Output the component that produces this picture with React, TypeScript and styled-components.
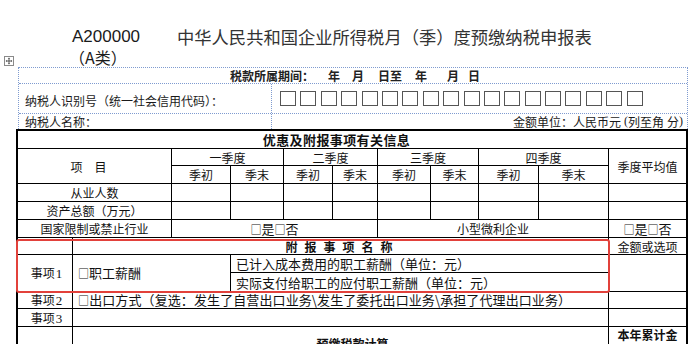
import React from "react";
import styled, { createGlobalStyle } from "styled-components";

const GlobalStyle = createGlobalStyle`
  html, body { margin: 0; padding: 0; background: #fff; }
  body {
    font-family: "Noto Sans CJK SC", "Noto Sans", sans-serif;
    color: #1a1a1a;
  }
`;

const Page = styled.div`
  position: relative;
  width: 700px;
  height: 344px;
  overflow: hidden;
  background: #fff;
`;

const Header = styled.header`
  display: flex;
  align-items: flex-start;
  height: 67px;
  box-sizing: border-box;
  padding: 27px 0 0 72px;
`;

const CodeBlock = styled.div`
  width: 105px;
  display: flex;
  flex-direction: column;
`;

const Code = styled.div`
  font-family: "Liberation Sans", Arial, sans-serif;
  font-size: 17px;
  line-height: 20px;
  color: #1a1a1a;
`;

const Category = styled.div`
  font-size: 16px;
  line-height: 20px;
  color: #1a1a1a;
  margin-left: -3px;
`;

const Title = styled.h1`
  margin: -1px 0 0 0;
  font-weight: 400;
  font-size: 17.3px;
  line-height: 22px;
  color: #333;
  white-space: nowrap;
`;

const MoveHandle = styled.div`
  position: absolute;
  left: 4px;
  top: 56px;
  width: 10px;
  height: 10px;
  line-height: 0;
`;

const dotted = "1px dotted #7f9bd0";

const InfoBox = styled.section`
  margin-left: 18px;
  width: 670px;
  box-sizing: border-box;
  border: ${dotted};
  border-bottom: none;
  font-size: 12px;
  color: #1a1a1a;
`;

const InfoRow = styled.div<{ $h: number; $last?: boolean }>`
  display: flex;
  height: ${(p) => p.$h}px;
  box-sizing: border-box;
  border-bottom: ${(p) => (p.$last ? "none" : dotted)};
`;

const PeriodLine = styled.div`
  display: flex;
  align-items: center;
  padding-left: 211px;
  font-weight: 700;
  line-height: 15px;
  color: #222;
`;

const PeriodItem = styled.span<{ $gap: number }>`
  margin-left: ${(p) => p.$gap}px;
`;

const InfoLabel = styled.div<{ $pt?: number }>`
  width: 253px;
  box-sizing: border-box;
  border-right: ${dotted};
  display: flex;
  align-items: center;
  padding: ${(p) => p.$pt ?? 0}px 0 0 6px;
  line-height: 15px;
  white-space: nowrap;
`;

const BoxList = styled.div`
  display: flex;
  align-items: center;
  gap: 4.4px;
  padding-left: 8px;
`;

const CodeBox = styled.span`
  display: block;
  width: 16px;
  height: 15px;
  box-sizing: border-box;
  border: 1.5px solid #555;
`;

const Unit = styled.div`
  flex: 1;
  display: flex;
  align-items: center;
  justify-content: flex-end;
  padding-right: 4px;
  line-height: 15px;
  white-space: pre;
`;

const Narrow = styled.span`
  font-family: "Liberation Serif", serif;
`;

const Grid = styled.div`
  position: relative;
  margin-left: 16px;
  width: 672px;
  box-sizing: border-box;
  border: 2px solid #000;
  background: #000;
  display: grid;
  grid-template-columns: 54px 98px 58px 52px 48px 44px 52px 47px 59px 69px 77px;
  grid-template-rows: 17px 16px 17px 17px 17px 17px 16px 17px 18px 16px 17px 32px;
  gap: 1px;
`;

const CellBase = styled.div<{ $col: string; $row: string }>`
  grid-column: ${(p) => p.$col};
  grid-row: ${(p) => p.$row};
  background: #fff;
  display: flex;
  align-items: center;
  justify-content: center;
  min-width: 0;
  white-space: nowrap;
  font-size: 12px;
  line-height: 15px;
  color: #111;
`;

const SectionCell = styled(CellBase)<{ $shift?: number }>`
  font-weight: 700;
  font-size: 13px;
  letter-spacing: 0.4px;
  padding-right: ${(p) => p.$shift ?? 0}px;
`;

const SpacedTitle = styled(CellBase)`
  font-weight: 700;
  letter-spacing: 7px;
  padding-left: 4px;
`;

const HeadCell = styled(CellBase)<{ $pr?: number }>`
  padding-right: ${(p) => p.$pr ?? 0}px;
`;

const ChoiceCell = styled(CellBase)`
  font-size: 13px;
`;

const ItemCell = styled(CellBase)`
  padding-left: 3px;
`;

const TextCell = styled(CellBase)<{ $ls?: number }>`
  justify-content: flex-start;
  padding-left: 5px;
  font-size: 13px;
  letter-spacing: ${(p) => p.$ls ?? 0}px;
`;

const CalcTitle = styled(CellBase)`
  font-weight: 700;
  padding-left: 24px;
  align-items: flex-start;
  padding-top: 9px;
`;

const WrapCell = styled(CellBase)`
  font-weight: 700;
  white-space: normal;
  padding: 0 4px;
  text-align: center;
  align-items: flex-start;
  line-height: 16px;
`;

const EmptyCell = styled(CellBase)``;

const Inline = styled.span`
  white-space: nowrap;
`;

const Num = styled.span`
  font-family: "Liberation Serif", serif;
  font-size: 13px;
  margin-left: 1px;
`;

const Tick = styled.span`
  font-size: 0.85em;
`;

const Highlight = styled.div`
  position: absolute;
  left: -2px;
  top: 108px;
  width: 594px;
  height: 54px;
  box-sizing: border-box;
  border: 2px solid #e2413b;
  border-radius: 3px;
  pointer-events: none;
`;

const periodItems: [string, number][] = [
  ["年", 14],
  ["月", 12],
  ["日至", 14],
  ["年", 13],
  ["月", 20],
  ["日", 9],
];

const quarters = ["一季度", "二季度", "三季度", "四季度"];

export default function App() {
  const dataCols = Array.from({ length: 9 }, (_, i) => i + 3);
  return (
    <>
      <GlobalStyle />
      <Page>
        <Header>
          <CodeBlock>
            <Code>A200000</Code>
            <Category>（A类）</Category>
          </CodeBlock>
          <Title>中华人民共和国企业所得税月（季）度预缴纳税申报表</Title>
        </Header>
        <MoveHandle>
          <svg width="10" height="10" viewBox="0 0 10 10">
            <rect x="0.5" y="0.5" width="9" height="9" fill="#fff" stroke="#8a8a8a" />
            <path d="M5 2.2V7.8M2.2 5H7.8" stroke="#444" strokeWidth="0.9" />
            <path d="M5 1.6L3.9 2.8H6.1Z M5 8.4L3.9 7.2H6.1Z M1.6 5L2.8 3.9V6.1Z M8.4 5L7.2 3.9V6.1Z" fill="#444" />
          </svg>
        </MoveHandle>

        <InfoBox>
          <InfoRow $h={16}>
            <PeriodLine>
              <span>税款所属期间：</span>
              {periodItems.map(([t, g], i) => (
                <PeriodItem key={i} $gap={g}>
                  {t}
                </PeriodItem>
              ))}
            </PeriodLine>
          </InfoRow>
          <InfoRow $h={30}>
            <InfoLabel $pt={3}>纳税人识别号（统一社会信用代码）：</InfoLabel>
            <BoxList>
              {Array.from({ length: 18 }).map((_, i) => (
                <CodeBox key={i} />
              ))}
            </BoxList>
          </InfoRow>
          <InfoRow $h={15} $last>
            <InfoLabel>纳税人名称：</InfoLabel>
            <Unit>
              金额单位：人民币元<Narrow> (</Narrow>列至角<Narrow> </Narrow>分<Narrow>)</Narrow>
            </Unit>
          </InfoRow>
        </InfoBox>

        <Grid>
          <SectionCell $col="1 / 12" $row="1" $shift={31}>
            优惠及附报事项有关信息
          </SectionCell>

          <HeadCell $col="1 / 3" $row="2 / 4" $pr={12}>
            项　目
          </HeadCell>
          {quarters.map((q, i) => (
            <HeadCell key={q} $col={`${3 + i * 2} / ${5 + i * 2}`} $row="2">
              {q}
            </HeadCell>
          ))}
          <HeadCell $col="11" $row="2 / 4">
            季度平均值
          </HeadCell>
          {Array.from({ length: 8 }, (_, i) => (
            <HeadCell key={i} $col={`${3 + i}`} $row="3">
              {i % 2 === 0 ? "季初" : "季末"}
            </HeadCell>
          ))}

          <HeadCell $col="1 / 3" $row="4">
            从业人数
          </HeadCell>
          {dataCols.map((c) => (
            <EmptyCell key={`a${c}`} $col={`${c}`} $row="4" />
          ))}
          <HeadCell $col="1 / 3" $row="5">
            资产总额（万元）
          </HeadCell>
          {dataCols.map((c) => (
            <EmptyCell key={`b${c}`} $col={`${c}`} $row="5" />
          ))}

          <HeadCell $col="1 / 3" $row="6">
            国家限制或禁止行业
          </HeadCell>
          <ChoiceCell $col="3 / 7" $row="6">
            <Inline>
              <Tick>□</Tick>是<Tick>□</Tick>否
            </Inline>
          </ChoiceCell>
          <HeadCell $col="7 / 11" $row="6">
            小型微利企业
          </HeadCell>
          <ChoiceCell $col="11" $row="6">
            <Inline>
              <Tick>□</Tick>是<Tick>□</Tick>否
            </Inline>
          </ChoiceCell>

          <EmptyCell $col="1" $row="7" />
          <SpacedTitle $col="2 / 11" $row="7">
            附报事项名称
          </SpacedTitle>
          <HeadCell $col="11" $row="7">
            金额或选项
          </HeadCell>

          <ItemCell $col="1" $row="8 / 10">
            <Inline>
              事项<Num>1</Num>
            </Inline>
          </ItemCell>
          <TextCell $col="2 / 4" $row="8 / 10">
            <Inline>
              <Tick>□</Tick>职工薪酬
            </Inline>
          </TextCell>
          <TextCell $col="4 / 11" $row="8">
            已计入成本费用的职工薪酬（单位：元）
          </TextCell>
          <TextCell $col="4 / 11" $row="9">
            实际支付给职工的应付职工薪酬（单位：元）
          </TextCell>
          <EmptyCell $col="11" $row="8 / 10" />

          <ItemCell $col="1" $row="10">
            <Inline>
              事项<Num>2</Num>
            </Inline>
          </ItemCell>
          <TextCell $col="2 / 11" $row="10" $ls={0.1}>
            <Inline>
              <Tick>□</Tick>出口方式（复选：发生了自营出口业务\发生了委托出口业务\承担了代理出口业务）
            </Inline>
          </TextCell>
          <EmptyCell $col="11" $row="10" />

          <ItemCell $col="1" $row="11">
            <Inline>
              事项<Num>3</Num>
            </Inline>
          </ItemCell>
          <EmptyCell $col="2 / 11" $row="11" />
          <EmptyCell $col="11" $row="11" />

          <EmptyCell $col="1" $row="12" />
          <CalcTitle $col="2 / 11" $row="12">
            预缴税款计算
          </CalcTitle>
          <WrapCell $col="11" $row="12">
            本年累计金额
          </WrapCell>

          <Highlight />
        </Grid>
      </Page>
    </>
  );
}
